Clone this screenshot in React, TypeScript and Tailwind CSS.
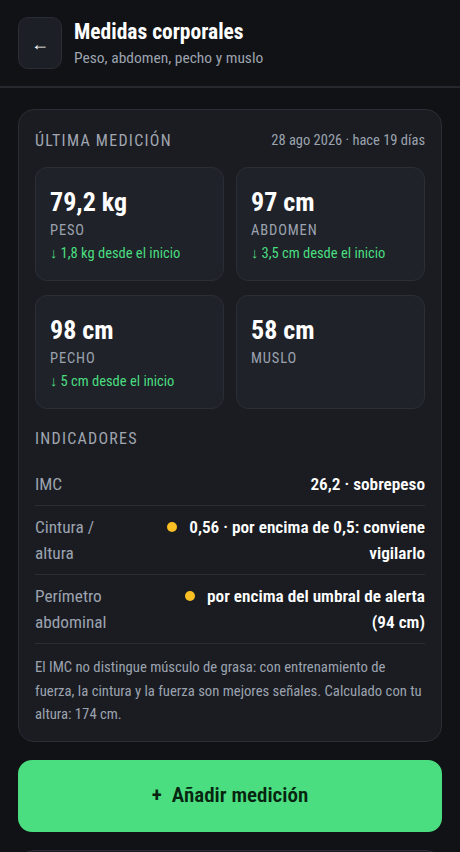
const stats = [
  { value: "79,2 kg", label: "Peso", delta: "↓ 1,8 kg desde el inicio" },
  { value: "97 cm", label: "Abdomen", delta: "↓ 3,5 cm desde el inicio" },
  { value: "98 cm", label: "Pecho", delta: "↓ 5 cm desde el inicio" },
  { value: "58 cm", label: "Muslo", delta: null },
];

const indicators = [
  { label: "IMC", value: "26,2 · sobrepeso", warn: false },
  { label: "Cintura / altura", value: "0,56 · por encima de 0,5: conviene vigilarlo", warn: true },
  { label: "Perímetro abdominal", value: "por encima del umbral de alerta (94\u00a0cm)", warn: true },
];

function StatCard({ value, label, delta }: { value: string; label: string; delta: string | null }) {
  return (
    <div className="h-[114px] rounded-[12px] border border-[#2a2e36] bg-[#1f2229] px-[14px] pt-[16px]">
      <div className="text-[26px] font-bold leading-[36px] text-white">{value}</div>
      <div className="mt-[1px] text-[14.5px] uppercase leading-[20px] tracking-[0.06em] text-[#9ca3af]">
        {label}
      </div>
      {delta && <div className="mt-[2px] text-[14.5px] leading-[22px] text-[#4ade80]">{delta}</div>}
    </div>
  );
}

export default function App() {
  return (
    <div className="min-h-[852px] bg-[#111215] font-['Roboto_Condensed',sans-serif] text-white">
      <header className="flex items-start gap-3 border-b-2 border-[#25282e] px-[18px] py-[17px]">
        <button className="flex h-[52px] w-11 shrink-0 items-center justify-center rounded-[10px] border border-[#2a2d35] bg-[#1d1f26] text-[18px] text-white">
          ←
        </button>
        <div className="flex flex-col">
          <h1 className="text-[21.5px] font-bold leading-[30px]">Medidas corporales</h1>
          <p className="text-[15.5px] leading-[22px] text-[#9ca3af]">Peso, abdomen, pecho y muslo</p>
        </div>
      </header>

      <main className="flex flex-col px-[18px] pt-[21px]">
        <section className="rounded-[16px] border border-[#2a2d35] bg-[#1a1c22] px-4 pb-[14px] pt-5">
          <div className="flex items-center justify-between">
            <h2 className="text-[16px] uppercase leading-[22px] tracking-[0.08em] text-[#a1a6b0]">
              Última medición
            </h2>
            <span className="text-[14.5px] leading-[22px] text-[#9ca3af]">28 ago 2026 · hace 19 días</span>
          </div>

          <div className="mt-[15px] grid grid-cols-2 gap-x-3 gap-y-[14px]">
            {stats.map((s) => (
              <StatCard key={s.label} {...s} />
            ))}
          </div>

          <h2 className="mt-[19px] text-[16px] uppercase leading-[22px] tracking-[0.08em] text-[#a1a6b0]">
            Indicadores
          </h2>

          <ul className="mt-[13px] flex flex-col">
            {indicators.map((r) => (
              <li
                key={r.label}
                className="flex items-start justify-between gap-4 border-b border-[#2a2d34] py-2 text-[17.25px] leading-[26px]"
              >
                <span className="w-[90px] shrink-0 text-[#9ca3af]">{r.label}</span>
                <span className="flex-1 text-right font-semibold text-white">
                  {r.warn && (
                    <span className="mr-3 inline-block h-2.5 w-2.5 rounded-full bg-[#fbbf24] align-[1px]" />
                  )}
                  {r.value}
                </span>
              </li>
            ))}
          </ul>

          <p className="mt-3 text-[14.7px] leading-[23.5px] text-[#9ca3af]">
            El IMC no distingue músculo de grasa: con entrenamiento de fuerza, la cintura y la fuerza son
            mejores señales. Calculado con tu altura: 174 cm.
          </p>
        </section>

        <button className="mt-[18px] flex h-[72px] items-center justify-center gap-2.5 rounded-[14px] bg-[#4ade80] text-[21px] font-semibold text-[#06240f]">
          <span>+</span>
          <span>Añadir medición</span>
        </button>

        <div className="mt-[18px] h-20 rounded-[16px] border border-[#2a2d35] bg-[#1a1c22]" />
      </main>
    </div>
  );
}
